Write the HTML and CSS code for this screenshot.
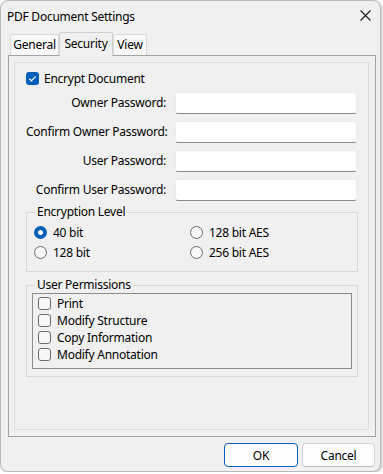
FILE: index.html
```html
<!DOCTYPE html>
<html lang="en">
<head>
    <meta charset="UTF-8">
    <title>PDF Document Settings</title>
    <link rel="stylesheet" href="styles.css">
</head>
<body>
    <div class="window">
        <div class="titlebar">
            <span class="title">PDF Document Settings</span>
            <svg class="close" width="11" height="11" viewBox="0 0 11 11">
                <path d="M0.5 0.5 L10.5 10.5 M10.5 0.5 L0.5 10.5" stroke="#1a1a1a" stroke-width="1.1" fill="none"/>
            </svg>
        </div>

        <div class="tabs">
            <div class="tab tab-general">General</div>
            <div class="tab tab-security active">Security</div>
            <div class="tab tab-view">View</div>
        </div>

        <div class="panel">
            <div class="page">
                <div class="encrypt">
                    <span class="box checked">
                        <svg width="13" height="13" viewBox="0 0 13 13">
                            <path d="M3.3 6.8 L5.4 8.8 L9.7 4.4" stroke="#fff" stroke-width="1.2" fill="none"/>
                        </svg>
                    </span>
                    Encrypt Document
                </div>

                <div class="fields">
                    <label>Owner Password:</label><span class="input"></span>
                    <label>Confirm Owner Password:</label><span class="input"></span>
                    <label>User Password:</label><span class="input"></span>
                    <label>Confirm User Password:</label><span class="input"></span>
                </div>

                <fieldset class="group level">
                    <legend>Encryption Level</legend>
                    <div class="radios">
                        <div class="radio-row"><span class="radio checked"></span>40 bit</div>
                        <div class="radio-row"><span class="radio"></span>128 bit AES</div>
                        <div class="radio-row"><span class="radio"></span>128 bit</div>
                        <div class="radio-row"><span class="radio"></span>256 bit AES</div>
                    </div>
                </fieldset>

                <fieldset class="group perms">
                    <legend>User Permissions</legend>
                    <div class="listbox">
                        <div class="list-row"><span class="box"></span>Print</div>
                        <div class="list-row"><span class="box"></span>Modify Structure</div>
                        <div class="list-row"><span class="box"></span>Copy Information</div>
                        <div class="list-row"><span class="box"></span>Modify Annotation</div>
                    </div>
                </fieldset>
            </div>
        </div>

        <div class="buttons">
            <button class="btn btn-ok">OK</button>
            <button class="btn btn-cancel">Cancel</button>
        </div>
    </div>
</body>
</html>
```
FILE: styles.css
```css
body {
    margin: 0;
    background: #ffffff;
    font-family: "Segoe UI", "Noto Sans", Arial, sans-serif;
    font-size: 12px;
    letter-spacing: -0.25px;
    color: #000;
}

.window {
    width: 381px;
    height: 472px;
    box-sizing: border-box;
    border: 1px solid #b9b9b9;
    border-radius: 8px;
    background: #f0f0f0;
    box-shadow: 1px 1px 3px rgba(0, 0, 0, 0.25);
    overflow: hidden;
    white-space: nowrap;
}

.titlebar {
    height: 31px;
    display: flex;
    align-items: center;
    justify-content: space-between;
    padding: 0 9px 0 6px;
}

.close {
    display: block;
    margin-top: -2px;
}

.tabs {
    height: 23px;
    display: flex;
    align-items: flex-end;
    padding-left: 9px;
}

.tab {
    box-sizing: border-box;
    height: 21px;
    border: 1px solid #d9d9d9;
    border-bottom: none;
    border-radius: 2px 2px 0 0;
    background: #f8f8f8;
    text-align: center;
    line-height: 20px;
}

.tab-general {
    width: 49px;
}

.tab-security {
    width: 54px;
}

.tab-view {
    width: 34px;
}

.tab.active {
    position: relative;
    z-index: 1;
    height: 24px;
    margin-bottom: -1px;
    background: #f0f0f0;
    border-color: #d0d0d0;
    line-height: 21px;
}

.panel {
    box-sizing: border-box;
    width: 368px;
    height: 382px;
    margin-left: 7px;
    padding: 6px 6px 6px 5px;
    border: 1px solid #a3a3a3;
    background: #f0f0f0;
}

.page {
    box-sizing: border-box;
    width: 355px;
    height: 368px;
    border: 1px solid #dcdcdc;
    padding: 7px 10px 0 11px;
}

.encrypt {
    display: flex;
    align-items: center;
    gap: 5px;
    height: 16px;
}

.box {
    box-sizing: border-box;
    width: 13px;
    height: 13px;
    flex: none;
    border: 1px solid #6b6b6b;
    border-radius: 3px;
    background: #f7f7f7;
}

.box.checked {
    border: none;
    background: #005fb8;
}

.box svg {
    display: block;
}

.fields {
    display: grid;
    grid-template-columns: 140px 182px;
    column-gap: 9px;
    row-gap: 7px;
    margin-top: 6px;
}

.fields label {
    text-align: right;
    line-height: 22px;
}

.input {
    box-sizing: border-box;
    height: 22px;
    background: #fff;
    border: 1px solid #ececec;
    border-bottom: 1px solid #8a8a8a;
    border-radius: 3px;
}

.group {
    box-sizing: border-box;
    width: 332px;
    margin: 0;
    border: 1px solid #d8d8d8;
    min-inline-size: 0;
}

.group legend {
    padding: 0 2px;
    line-height: 16px;
}

.level {
    margin-top: 3px;
    padding: 2px 8px 9px 7px;
}

.level legend {
    margin-left: 1px;
}

.radios {
    display: grid;
    grid-template-columns: 156px 1fr;
}

.radio-row {
    display: flex;
    align-items: center;
    gap: 6px;
    height: 20px;
}

.radio {
    box-sizing: border-box;
    width: 13px;
    height: 13px;
    flex: none;
    border: 1px solid #6b6b6b;
    border-radius: 50%;
    background: #f7f7f7;
}

.radio.checked {
    border: 4px solid #005fb8;
    background: #fff;
}

.perms {
    margin-top: 5px;
    padding: 0 5px 7px 5px;
}

.perms legend {
    margin-left: 3px;
}

.listbox {
    box-sizing: border-box;
    height: 76px;
    border: 1px solid #8c8c8c;
    padding: 1px 5px 0 5px;
}

.list-row {
    display: flex;
    align-items: center;
    gap: 6px;
    height: 17px;
}

.buttons {
    display: flex;
    justify-content: flex-end;
    gap: 4px;
    margin-top: 6px;
    padding-right: 5px;
}

.btn {
    box-sizing: border-box;
    height: 24px;
    padding: 0;
    font-family: inherit;
    font-size: 12px;
    letter-spacing: inherit;
    color: #000;
    background: #fdfdfd;
    border: 1px solid #d3d3d3;
    border-bottom-color: #bcbcbc;
    border-radius: 4px;
}

.btn-ok {
    width: 74px;
    border: 1px solid #005fb8;
}

.btn-cancel {
    width: 73px;
}
```
